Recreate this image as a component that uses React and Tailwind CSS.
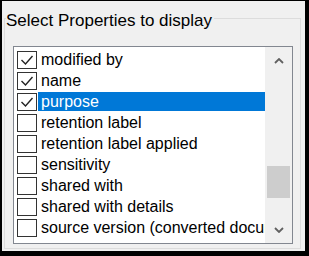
const rows = [
  { label: 'modified by', checked: true },
  { label: 'name', checked: true },
  { label: 'purpose', checked: true, selected: true },
  { label: 'retention label', checked: false },
  { label: 'retention label applied', checked: false },
  { label: 'sensitivity', checked: false },
  { label: 'shared with', checked: false },
  { label: 'shared with details', checked: false },
  { label: 'source version (converted document)', checked: false },
]

const CheckBox = ({ checked }) => (
  <div className="w-[20px] h-[18px] shrink-0 border border-[#333333] bg-white flex items-center justify-center">
    {checked && (
      <svg width="18" height="16" viewBox="0 0 18 16">
        <path d="M3.5 8 L7.5 12 L14.5 4" fill="none" stroke="#222222" strokeWidth="1.4" />
      </svg>
    )}
  </div>
)

const Chevron = ({ down }) => (
  <svg width="10" height="6" viewBox="0 0 10 6">
    <path
      d={down ? 'M1 1 L5 5 L9 1' : 'M1 5 L5 1 L9 5'}
      fill="none"
      stroke="#606060"
      strokeWidth="1.8"
    />
  </svg>
)

const App = () => {
  return (
    <div
      className="w-[309px] h-[256px] bg-[#f0f0f0] border-black border-t-[1px] border-l-[2px] border-r-[4px] border-b-[5px] flex flex-col overflow-hidden"
      style={{ fontFamily: '"Liberation Sans", Arial, sans-serif' }}
    >
      <fieldset className="mt-[4px] ml-[2px] mr-[4px] mb-[2px] flex-1 min-w-0 border border-[#dcdcdc] pb-[4px] flex flex-col">
        <legend className="ml-[1px] pt-[6px] text-[17px] leading-[20px] text-black pr-[2px]">
          Select Properties to display
        </legend>
        <div className="mt-[15px] ml-[8px] mr-[7px] h-[198px] border border-[#828790] bg-white flex min-w-0">
          <div className="flex-1 min-w-0 overflow-hidden pt-[2px]">
            {rows.map((row) => (
              <div key={row.label} className="h-[21px] flex items-center pl-[3px]">
                <CheckBox checked={row.checked} />
                <div
                  className={
                    row.selected
                      ? 'ml-[1px] flex-1 min-w-0 overflow-hidden h-[19px] leading-[19px] pl-[3px] bg-[#0078d7] text-white text-[16px] whitespace-nowrap'
                      : 'ml-[1px] flex-1 min-w-0 overflow-hidden h-[19px] leading-[19px] pl-[3px] text-black text-[16px] whitespace-nowrap'
                  }
                >
                  {row.label}
                </div>
              </div>
            ))}
          </div>
          <div className="w-[27px] shrink-0 bg-[#f0f0f0] flex flex-col">
            <div className="h-[27px] flex items-center justify-center">
              <Chevron />
            </div>
            <div className="flex-1 px-[2px]">
              <div className="mt-[92px] h-[32px] bg-[#cdcdcd]" />
            </div>
            <div className="h-[27px] flex items-center justify-center">
              <Chevron down />
            </div>
          </div>
        </div>
      </fieldset>
    </div>
  )
}

export default App
